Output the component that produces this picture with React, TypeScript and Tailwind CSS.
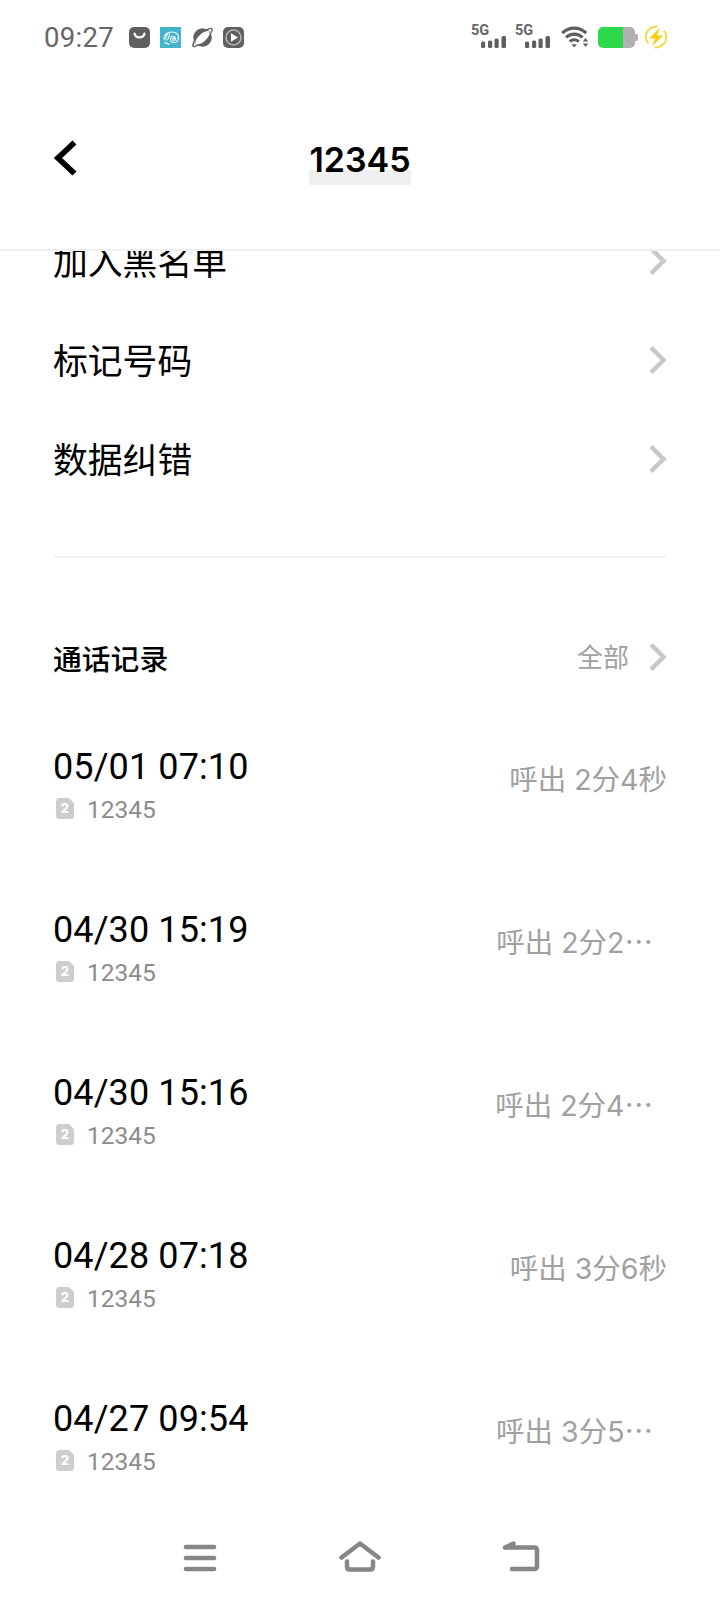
type Call = {
  time: string
  duration: string
  truncated?: boolean
}

const actions = ['加入黑名单', '标记号码', '数据纠错']

const calls: Call[] = [
  {time: '05/01 07:10', duration: '呼出 2分4秒'},
  {time: '04/30 15:19', duration: '呼出 2分2', truncated: true},
  {time: '04/30 15:16', duration: '呼出 2分4', truncated: true},
  {time: '04/28 07:18', duration: '呼出 3分6秒'},
  {time: '04/27 09:54', duration: '呼出 3分5', truncated: true},
]

const Chevron = () => (
  <svg className="-mt-px" width="18" height="30" viewBox="0 0 18 30" fill="none" stroke="#c8c8c8" strokeWidth="4.500">
    <path d="M2 2.500 14.500 15 2 27.500" />
  </svg>
)

const Signal = () => (
  <div className="relative h-[22px] w-[36px]">
    <span className="absolute -top-[3px] left-0 text-[14.500px] leading-[16px] font-bold text-[#666]">5G</span>
    <svg className="absolute inset-0" width="36" height="22" viewBox="0 0 36 22" fill="#5f5f5f">
      <rect x="10" y="15.500" width="4.200" height="6.500" rx="1.500" />
      <rect x="17" y="14.500" width="4.200" height="7.500" rx="1.500" />
      <rect x="23.500" y="12.500" width="4.200" height="9.500" rx="1.500" />
      <rect x="30.500" y="10" width="4.500" height="12" rx="1.500" />
    </svg>
  </div>
)

const StatusBar = () => (
  <div className="flex h-[74px] shrink-0 items-center pr-[52px] pl-11">
    <span className="mt-[2px] w-[85px] text-[27.500px] tracking-[0.300px] text-[#666]">09:27</span>
    <div className="flex gap-[10.400px]">
      <svg width="21" height="21" viewBox="0 0 21 21">
        <rect width="21" height="21" rx="5" fill="#5f5f5f" />
        <path d="M5.500 6.500c1 5.200 9 5.200 10 0" fill="none" stroke="#fff" strokeWidth="2.200" strokeLinecap="round" />
      </svg>
      <svg width="21" height="21" viewBox="0 0 21 21" fill="none">
        <rect width="21" height="21" fill="#44b4cc" />
        <g stroke="#fff" strokeWidth="1.100" strokeLinecap="round">
          <path d="M4 12c0-4 3-7 7.500-7 4 0 7 2 7 5.500 0 3-2 5-4.500 5-2 0-3.500-1.300-3.500-3.200 0-1.600 1.200-2.800 2.700-2.800 1.300 0 2.200.9 2.200 2" />
          <path d="M4.500 13C6 11 7 9 7.500 6.500M7.500 13c1-1.800 1.700-3.500 2-6M5 15.500c1.500 1 3 1.600 4.500 1.500" />
          <circle cx="14" cy="12.200" r="1.200" />
        </g>
      </svg>
      <svg width="21" height="21" viewBox="0 0 21 21" fill="none">
        <circle cx="10.500" cy="10.500" r="9.300" fill="#5f5f5f" />
        <ellipse cx="10.500" cy="10.800" rx="9" ry="3.900" transform="rotate(-42 10.500 10.800)" fill="#fff" />
        <path d="M2.200 14.500C.6 17 .4 19.300 1.800 19.600c1.200.2 2.800-.6 4.400-1.800M14.500 3.200c2.300-1.500 4.500-2.200 5.300-1.500.8.800.1 2.600-1.200 4.800" stroke="#5f5f5f" strokeWidth="1.400" />
      </svg>
      <svg width="21" height="21" viewBox="0 0 21 21" fill="none">
        <rect width="21" height="21" rx="5" fill="#5f5f5f" />
        <circle cx="10.500" cy="10.500" r="7.500" stroke="#b4b4b4" strokeWidth="1.600" />
        <path d="M8 6.200v8.600l7-4.300Z" fill="#fff" />
      </svg>
    </div>
    <div className="ml-auto flex items-center">
      <Signal />
      <div className="w-2" />
      <Signal />
      <svg className="ml-[10px]" width="28" height="22" viewBox="0 0 28 22" fill="none" stroke="#5f5f5f" strokeWidth="3.200">
        <path d="M1.200 7.200c6.500-6.800 17.600-6.800 24 0" />
        <path d="M5 11.500c4.500-4.600 12-4.600 16.500 0" />
        <path d="M8.800 15.600c2.500-2.500 6.500-2.500 9 0" />
        <path d="M10.500 18.300h5.500L13.200 21.500Z M21.800 15.500 24.500 12l2.700 3.500Z M21.800 17.500h5.400l-2.700 3.500Z" fill="#5f5f5f" stroke="none" />
      </svg>
      <svg className="ml-[9px]" width="40" height="21" viewBox="0 0 40 21">
        <path d="M24 0h8a5 5 0 0 1 5 5v2h1a2 2 0 0 1 2 2v3a2 2 0 0 1-2 2h-1v2a5 5 0 0 1-5 5h-8Z" fill="#b0b0b0" />
        <path d="M5 0h20v21H5a5 5 0 0 1-5-5V5a5 5 0 0 1 5-5Z" fill="#2bd94a" />
      </svg>
      <svg className="ml-[6px]" width="24" height="24" viewBox="0 0 24 24" fill="none" stroke="#f5d94f" strokeWidth="2">
        <path d="M13.500 1.500C6.500 1.200 1.500 6 1.800 12.500c.1 2.500 1 4.500 2.500 6" />
        <path d="M10.500 22.500c7 .3 12-4.500 11.700-11-.1-2.500-1-4.500-2.500-6" />
        <path d="M16 2.500 5 13.500h6L8 21.500 19 10.500h-6Z" fill="#f8cf10" stroke="none" />
      </svg>
    </div>
  </div>
)

const CallRow = ({time, duration, truncated}: Call) => (
  <li className="flex h-[163px] justify-between">
    <div>
      <div className="pt-px text-[36px] leading-[44px] tracking-[0.100px] whitespace-pre text-black">{time}</div>
      <div className="flex h-[41px] items-center pl-[3px]">
        <div className="relative -mt-[3px] h-[21px] w-[18px]">
          <svg width="18" height="21" viewBox="0 0 18 21" fill="#cdcdcd">
            <path d="M3.500 0H12q1 0 2 1l3 3q1 1 1 2v11.500a3.500 3.500 0 0 1-3.500 3.500h-11A3.500 3.500 0 0 1 0 17.500v-14A3.500 3.500 0 0 1 3.500 0Z" />
          </svg>
          <span className="absolute inset-0 text-center font-['Inter',sans-serif] text-[13px] leading-[21px] font-extrabold text-white">2</span>
        </div>
        <span className="mt-[2px] ml-[13px] text-[24.500px] text-[#8c8c8c]">12345</span>
      </div>
    </div>
    <div className="mt-[14px] flex font-['Inter','Noto_Sans_CJK_SC',sans-serif] text-[28.500px] leading-[44px] whitespace-pre text-[#a0a0a0]">
      {duration}
      {truncated && <span lang="zh-CN" className="-mt-[2px] mr-[14px] font-['Noto_Sans_CJK_SC',sans-serif]">…</span>}
    </div>
  </li>
)

export default function App() {
  return (
    <div className="flex h-[1600px] w-[720px] flex-col overflow-hidden bg-white font-['Roboto','Noto_Sans_CJK_SC',sans-serif]">
      <StatusBar />

      <header className="flex h-[177px] shrink-0 items-start border-b-2 border-[#efefef] px-[53px] pt-[66px]">
        <svg width="24" height="36" viewBox="0 0 24 36" fill="none" stroke="#000" strokeWidth="5.800">
          <path d="M21.500 2.500 5 18l16.500 15.500" />
        </svg>
        <h1 className="mx-auto h-[45px] bg-linear-to-b from-transparent from-67% to-[#efefef] to-67% font-['Inter',sans-serif] text-[34px] leading-[40px] font-semibold text-black">
          12345
        </h1>
        <div className="w-6" />
      </header>

      <ul className="shrink-0 overflow-hidden px-[53px]">
        {actions.map((label) => (
          <li key={label} className="flex h-[99px] items-center justify-between text-[34.800px] text-black first:-mt-[39px]">
            <span className="mt-[4px]">{label}</span>
            <Chevron />
          </li>
        ))}
      </ul>

      <hr className="mx-[53px] mt-[47px] shrink-0 border-t-2 border-[#f3f3f3]" />

      <section className="shrink-0 px-[53px]">
        <div className="mt-[77px] flex h-[44px] items-center">
          <h2 className="mt-[7px] text-[28.800px] font-medium text-black">通话记录</h2>
          <span className="mt-[2px] mr-5 ml-auto text-[26px] text-[#a0a0a0]">全部</span>
          <Chevron />
        </div>
        <ul className="mt-[65px]">
          {calls.map((call) => (
            <CallRow key={call.time} {...call} />
          ))}
        </ul>
      </section>

      <nav className="-mt-[18px] flex h-[60px] shrink-0 items-start justify-center gap-[118px]">
        <svg width="42" height="34" viewBox="0 0 42 34" fill="none" stroke="#868686" strokeWidth="4.700" strokeLinecap="round">
          <path d="M7 6h28M7 17h28M7 28h28" />
        </svg>
        <svg width="42" height="34" viewBox="0 0 42 34" fill="none" stroke="#868686" strokeWidth="4.500" strokeLinecap="round" strokeLinejoin="round">
          <path d="M2.500 16.500 21 2.500l18.500 14M8 20.500v5q0 3 3 3h20q3 0 3-3v-5" />
        </svg>
        <svg width="42" height="34" viewBox="0 0 42 34" fill="none" stroke="#868686" strokeWidth="4.500" strokeLinecap="round" strokeLinejoin="round">
          <path d="M14.500 2.500 6 6.500h29q3 0 3 3v15.500q0 3-3 3H13" />
        </svg>
      </nav>
    </div>
  )
}
